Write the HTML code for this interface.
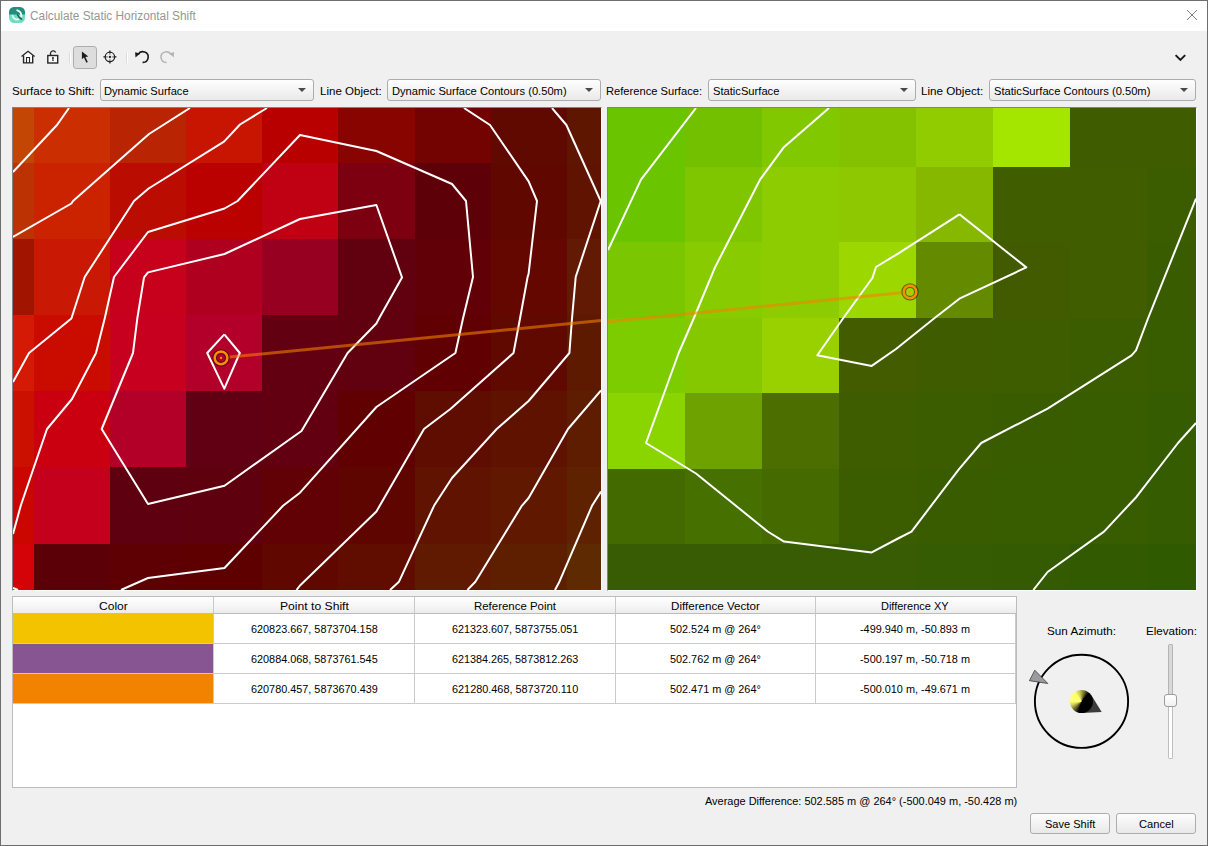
<!DOCTYPE html>
<html><head><meta charset="utf-8"><title>Calculate Static Horizontal Shift</title>
<style>
html,body{margin:0;padding:0;}
body{width:1208px;height:846px;overflow:hidden;background:#f0f0f0;font-family:"Liberation Sans",sans-serif;}
#win{position:absolute;left:0;top:0;width:1208px;height:846px;background:#f0f0f0;overflow:hidden;}
#win>*{position:absolute;}
.t{position:absolute;white-space:nowrap;line-height:14px;transform-origin:0 0;display:block;}
#titlebar{left:1px;top:1px;width:1206px;height:30px;background:#fff;}
.bl{background:#6e6e6e;}
.panel{position:absolute;display:block;}
.frame{box-sizing:border-box;border-top:1px solid #828282;border-left:1px solid #828282;border-right:1px solid #fbfbfb;border-bottom:1px solid #fdfdfd;}
.combo{box-sizing:border-box;height:22px;top:79px;border:1px solid #acacac;border-radius:3px;background:linear-gradient(#fefefe,#f4f4f4 50%,#e9e9e9);}
.combo i{position:absolute;right:7px;top:8px;width:0;height:0;border-left:4px solid transparent;border-right:4px solid transparent;border-top:4.5px solid #4a4a4a;}
.btn{box-sizing:border-box;height:21px;top:813px;border:1px solid #adadad;border-radius:3px;background:linear-gradient(#fdfdfd,#f3f3f3 50%,#e8e8e8);}
#table{left:12px;top:596px;width:1005px;height:192px;box-sizing:border-box;border:1px solid #bcbcbc;background:#fff;}
#table div{position:absolute;}
.hd{top:0;height:16px;background:linear-gradient(#ffffff,#f7f7f7 50%,#ececec);border-bottom:1px solid #bdbdbd;border-right:1px solid #c9c9c9;box-sizing:content-box;}
.vl{top:17px;width:1px;height:90px;background:#cbcbcb;}
.hl{left:0;width:1003px;height:1px;background:#cbcbcb;}
</style></head><body><div id="win">

<div id="titlebar"></div>
<svg style="left:9px;top:7px" width="16" height="16" viewBox="0 0 16 16">
<defs><clipPath id="ic"><rect x="0" y="0" width="16" height="16" rx="5.2" ry="5.2"/></clipPath></defs>
<g clip-path="url(#ic)"><rect width="16" height="16" fill="#6ddcc1"/><rect width="16" height="7.5" fill="#248d7d"/></g>
<path d="M8.3 3.3 A5.6 5.6 0 0 1 12.3 9.4" fill="none" stroke="#f4fffb" stroke-width="1.9" stroke-linecap="round"/>
<path d="M8.5 7.8 Q9.8 10.8 12.6 12.1" fill="none" stroke="#1b5852" stroke-width="1.5" stroke-linecap="round"/>
<path d="M3.5 8.6 A4.8 4.8 0 0 0 9.3 12.4" fill="none" stroke="#e6fbf5" stroke-width="1.9" stroke-linecap="round"/>
</svg>
<span class="t" style="left:30.10px;top:9.00px;font-size:12px;color:#969696;transform:scaleX(0.9863);">Calculate Static Horizontal Shift</span>
<svg style="left:1186px;top:9px" width="12" height="12" viewBox="0 0 12 12"><path d="M1 1 L11 11 M11 1 L1 11" stroke="#7a7a7a" stroke-width="1" fill="none"/></svg>
<svg style="left:14px;top:44px" width="170" height="28" viewBox="14 44 170 28">
<path d="M23.55 56 L28.05 52 L32.7 56 V62.9 H23.55 Z" fill="#fbfbfb"/>
<g fill="none" stroke="#262626" stroke-width="1.3" stroke-linejoin="miter">
<path d="M21.5 56.4 L28.05 51.35 L34.6 56.4"/>
<path d="M23.55 55.4 V62.9 H32.7 V55.4" stroke-width="1.4"/>
<path d="M26.5 62.9 V57.5 H29.5 V62.9" stroke-width="1.1"/>
<rect x="47.8" y="55.5" width="9.9" height="7.5" fill="#fbfbfb" stroke-width="1.4"/>
<path d="M50.5 55.5 V53.2 A2.65 2.65 0 0 1 55.6 52.5" stroke-width="1.3"/>
</g>
<circle cx="52.95" cy="58.1" r="1.0" fill="#1c1c1c"/><rect x="52.2" y="59.4" width="1.5" height="1.5" fill="#1c1c1c"/>
<rect x="69" y="52" width="1" height="11" fill="#dcdcdc"/><rect x="70" y="52" width="1" height="11" fill="#ffffff"/>
<rect x="73.5" y="46.5" width="23" height="22" rx="2.7" ry="2.7" fill="#dddddd" stroke="#adadad" stroke-width="1"/>
<path d="M81.9 51.5 L81.9 59.2 L83.9 57.4 L86.4 62.8 L87.8 62.1 L85.4 57 L88.3 56.6 Z" fill="#1a1a1a"/>
<g fill="none" stroke="#222" stroke-width="1.25">
<circle cx="109.9" cy="56.9" r="4.7"/>
<path d="M109.9 50.4 V53.4 M109.9 60.4 V63.4 M103.4 56.9 H106.4 M113.4 56.9 H116.4"/>
</g>
<path d="M109.9 53.4 V55 M109.9 58.8 V60.4 M106.4 56.9 H108 M111.8 56.9 H113.4" stroke="#8c8c8c" stroke-width="1.1" fill="none"/>
<rect x="108.9" y="55.9" width="2" height="2" fill="#1e1e1e"/>
<rect x="126" y="52" width="1" height="11" fill="#dcdcdc"/><rect x="127" y="52" width="1" height="11" fill="#ffffff"/>
<path d="M138.2 54.6 A5.3 5.3 0 1 1 142.6 62.4" fill="none" stroke="#1a1a1a" stroke-width="1.6"/>
<path d="M135.1 52.3 L140 53.6 L135.5 57.6 Z" fill="#1a1a1a"/>
<path d="M171 54.6 A5.3 5.3 0 1 0 166.6 62.4" fill="none" stroke="#b4b4b4" stroke-width="1.5"/>
<path d="M174.1 52.1 L169.3 53.6 L173.8 57.4 Z" fill="#b4b4b4"/>
</svg>
<svg style="left:1173px;top:52px" width="14" height="11" viewBox="0 0 14 11"><path d="M2.6 3.1 L7.4 7.9 L12.2 3.1" fill="none" stroke="#1a1a1a" stroke-width="2"/></svg>
<span class="t" style="left:11.88px;top:84.00px;font-size:11.5px;color:#000;transform:scaleX(1.0079);">Surface to Shift:</span>
<div class="combo" style="left:100px;width:214px"><i></i></div>
<span class="t" style="left:104.49px;top:84.00px;font-size:11.5px;color:#000;transform:scaleX(0.9662);">Dynamic Surface</span>
<span class="t" style="left:319.66px;top:84.00px;font-size:11.5px;color:#000;transform:scaleX(1.0035);">Line Object:</span>
<div class="combo" style="left:387px;width:214px"><i></i></div>
<span class="t" style="left:391.69px;top:84.00px;font-size:11.5px;color:#000;transform:scaleX(0.9687);">Dynamic Surface Contours (0.50m)</span>
<span class="t" style="left:606.49px;top:84.00px;font-size:11.5px;color:#000;transform:scaleX(0.9690);">Reference Surface:</span>
<div class="combo" style="left:708px;width:208px"><i></i></div>
<span class="t" style="left:712.90px;top:84.00px;font-size:11.5px;color:#000;transform:scaleX(0.9707);">StaticSurface</span>
<span class="t" style="left:921.45px;top:84.00px;font-size:11.5px;color:#000;transform:scaleX(1.0136);">Line Object:</span>
<div class="combo" style="left:989px;width:207px"><i></i></div>
<span class="t" style="left:994.00px;top:84.00px;font-size:11.5px;color:#000;transform:scaleX(0.9709);">StaticSurface Contours (0.50m)</span>
<div class="frame" style="left:12px;top:107px;width:590px;height:484px"></div>
<div class="frame" style="left:607px;top:107px;width:590px;height:484px"></div>
<svg class="panel pl" style="left:13px;top:108px" width="588" height="482" viewBox="13 108 588 482">
<g shape-rendering="crispEdges">
<rect x="13" y="108" width="21" height="55" fill="#c34604"/>
<rect x="34" y="108" width="76" height="55" fill="#cb2e00"/>
<rect x="110" y="108" width="76" height="55" fill="#b92403"/>
<rect x="186" y="108" width="76" height="55" fill="#c71501"/>
<rect x="262" y="108" width="76" height="55" fill="#b90000"/>
<rect x="338" y="108" width="77" height="55" fill="#870400"/>
<rect x="415" y="108" width="76" height="55" fill="#730300"/>
<rect x="491" y="108" width="76" height="55" fill="#600900"/>
<rect x="567" y="108" width="34" height="55" fill="#5e1600"/>
<rect x="13" y="163" width="21" height="76" fill="#bd3203"/>
<rect x="34" y="163" width="76" height="76" fill="#cb2300"/>
<rect x="110" y="163" width="76" height="76" fill="#ba0c00"/>
<rect x="186" y="163" width="76" height="76" fill="#bb0000"/>
<rect x="262" y="163" width="76" height="76" fill="#c00013"/>
<rect x="338" y="163" width="77" height="76" fill="#7c0010"/>
<rect x="415" y="163" width="76" height="76" fill="#5e0008"/>
<rect x="491" y="163" width="76" height="76" fill="#600700"/>
<rect x="567" y="163" width="34" height="76" fill="#601400"/>
<rect x="13" y="239" width="21" height="76" fill="#a11400"/>
<rect x="34" y="239" width="76" height="76" fill="#c91803"/>
<rect x="110" y="239" width="76" height="76" fill="#c7001c"/>
<rect x="186" y="239" width="76" height="76" fill="#b00020"/>
<rect x="262" y="239" width="76" height="76" fill="#970020"/>
<rect x="338" y="239" width="77" height="76" fill="#61000f"/>
<rect x="415" y="239" width="76" height="76" fill="#610007"/>
<rect x="491" y="239" width="76" height="76" fill="#630700"/>
<rect x="567" y="239" width="34" height="76" fill="#631a04"/>
<rect x="13" y="315" width="21" height="76" fill="#d41a05"/>
<rect x="34" y="315" width="76" height="76" fill="#c90b00"/>
<rect x="110" y="315" width="76" height="76" fill="#c7001f"/>
<rect x="186" y="315" width="76" height="76" fill="#b2002a"/>
<rect x="262" y="315" width="76" height="76" fill="#620012"/>
<rect x="338" y="315" width="77" height="76" fill="#61000e"/>
<rect x="415" y="315" width="76" height="76" fill="#600003"/>
<rect x="491" y="315" width="76" height="76" fill="#600900"/>
<rect x="567" y="315" width="34" height="76" fill="#5e1a00"/>
<rect x="13" y="391" width="21" height="76" fill="#cb1000"/>
<rect x="34" y="391" width="76" height="76" fill="#ca0010"/>
<rect x="110" y="391" width="76" height="76" fill="#b30028"/>
<rect x="186" y="391" width="76" height="76" fill="#600012"/>
<rect x="262" y="391" width="76" height="76" fill="#620012"/>
<rect x="338" y="391" width="77" height="76" fill="#600000"/>
<rect x="415" y="391" width="76" height="76" fill="#5f0d00"/>
<rect x="491" y="391" width="76" height="76" fill="#601200"/>
<rect x="567" y="391" width="34" height="76" fill="#5e1c00"/>
<rect x="13" y="467" width="21" height="77" fill="#cb0500"/>
<rect x="34" y="467" width="76" height="77" fill="#c4001c"/>
<rect x="110" y="467" width="76" height="77" fill="#5e000f"/>
<rect x="186" y="467" width="76" height="77" fill="#5f000e"/>
<rect x="262" y="467" width="76" height="77" fill="#610005"/>
<rect x="338" y="467" width="77" height="77" fill="#5f0500"/>
<rect x="415" y="467" width="76" height="77" fill="#601400"/>
<rect x="491" y="467" width="76" height="77" fill="#601800"/>
<rect x="567" y="467" width="34" height="77" fill="#5e2200"/>
<rect x="13" y="544" width="21" height="46" fill="#d40308"/>
<rect x="34" y="544" width="76" height="46" fill="#5c0008"/>
<rect x="110" y="544" width="76" height="46" fill="#5e0003"/>
<rect x="186" y="544" width="76" height="46" fill="#5e0000"/>
<rect x="262" y="544" width="76" height="46" fill="#600800"/>
<rect x="338" y="544" width="77" height="46" fill="#600d00"/>
<rect x="415" y="544" width="76" height="46" fill="#601a02"/>
<rect x="491" y="544" width="76" height="46" fill="#5e1e00"/>
<rect x="567" y="544" width="34" height="46" fill="#5e2a02"/>
</g>
<g fill="none" stroke="#fff" stroke-width="2" stroke-linejoin="round">
<polyline points="69,108 57,125 13,172"/>
<polyline points="190,108 149,134 73,201 71.4,203.5 13,237"/>
<polyline points="267,108 240,124.5 224,141.6 148.6,188.5 134,201 84.7,277 71.4,318.5 29,353 13,382"/>
<polyline points="13,534 20.8,505.5 47,429 72,399 96,353 104.7,318.5 114,277 148,232 224.5,208.5 237.6,201 300,135 376.4,151 452,184 466,201 473,277 463,318.5 455.4,353 376.4,407 300,492.7 283,505.8 224.5,568 148,578 121,590"/>
<polyline points="144,277.4 148,272.4 224.5,254 300,219 376.4,205 402,277.4 379,318.5 376.4,323.5 347.6,353 301.5,431 224.5,485.7 148,504 101.7,429 133,353 137.3,318.5 144,277.4"/>
<polyline points="464,108 490,125 528.6,181.4 537,201 528.6,273.7 527.6,277 520,318.5 513.5,353 450.4,409 424,429 376.4,511.5 300,585.5 296.5,590"/>
<polyline points="552,108 566.4,125 600.7,201 575.7,277 572,318.5 569.4,353 528.6,401 496.7,429 452,478 434,505.8 399,581.7 390,590"/>
<polyline points="601,390.4 568,429 528.6,498 521.8,505.8 475.4,581.7 467.4,590"/>
<polyline points="601,491.5 592,505.8 559.4,581.7 555,590"/>
<polyline points="13,588 18,590"/>
<polyline points="224.3,334.4 239.8,353 224.3,388.6 207.2,353 224.3,334.4"/>
</g>
<line x1="229.36" y1="357.08" x2="601.00" y2="320.60" stroke="#f48200" stroke-opacity="0.58" stroke-width="3"/>
<circle cx="221.0" cy="357.9" r="6.3" fill="none" stroke="#000" stroke-opacity="0.5" stroke-width="4.7"/>
<circle cx="221.0" cy="357.9" r="6.3" fill="none" stroke="#fb8e00" stroke-width="2.6"/>
<rect x="220.0" y="356.9" width="2" height="2" fill="#ff9a00"/>
</svg>
<svg class="panel pr" style="left:608px;top:108px" width="588" height="482" viewBox="608 108 588 482">
<g shape-rendering="crispEdges">
<rect x="608" y="108" width="77" height="59" fill="#6bc400"/>
<rect x="685" y="108" width="77" height="59" fill="#73c000"/>
<rect x="762" y="108" width="77" height="59" fill="#82c800"/>
<rect x="839" y="108" width="77" height="59" fill="#84c200"/>
<rect x="916" y="108" width="77" height="59" fill="#90cc00"/>
<rect x="993" y="108" width="77" height="59" fill="#a4e600"/>
<rect x="1070" y="108" width="77" height="59" fill="#405c00"/>
<rect x="1147" y="108" width="49" height="59" fill="#405c00"/>
<rect x="608" y="167" width="77" height="75" fill="#6bc400"/>
<rect x="685" y="167" width="77" height="75" fill="#80c600"/>
<rect x="762" y="167" width="77" height="75" fill="#8ccc00"/>
<rect x="839" y="167" width="77" height="75" fill="#8ec800"/>
<rect x="916" y="167" width="77" height="75" fill="#86b800"/>
<rect x="993" y="167" width="77" height="75" fill="#405e00"/>
<rect x="1070" y="167" width="77" height="75" fill="#405e00"/>
<rect x="1147" y="167" width="49" height="75" fill="#3c5c00"/>
<rect x="608" y="242" width="77" height="76" fill="#7ac600"/>
<rect x="685" y="242" width="77" height="76" fill="#88cc00"/>
<rect x="762" y="242" width="77" height="76" fill="#8ccc00"/>
<rect x="839" y="242" width="77" height="76" fill="#9cd800"/>
<rect x="916" y="242" width="77" height="76" fill="#648a00"/>
<rect x="993" y="242" width="77" height="76" fill="#435b00"/>
<rect x="1070" y="242" width="77" height="76" fill="#405e00"/>
<rect x="1147" y="242" width="49" height="76" fill="#3a5c00"/>
<rect x="608" y="318" width="77" height="75" fill="#7ccc00"/>
<rect x="685" y="318" width="77" height="75" fill="#86c800"/>
<rect x="762" y="318" width="77" height="75" fill="#98d000"/>
<rect x="839" y="318" width="77" height="75" fill="#445c00"/>
<rect x="916" y="318" width="77" height="75" fill="#405c00"/>
<rect x="993" y="318" width="77" height="75" fill="#3e5c00"/>
<rect x="1070" y="318" width="77" height="75" fill="#3c5c00"/>
<rect x="1147" y="318" width="49" height="75" fill="#385c00"/>
<rect x="608" y="393" width="77" height="76" fill="#8ad400"/>
<rect x="685" y="393" width="77" height="76" fill="#6ea200"/>
<rect x="762" y="393" width="77" height="76" fill="#4c6e00"/>
<rect x="839" y="393" width="77" height="76" fill="#3e5c00"/>
<rect x="916" y="393" width="77" height="76" fill="#3c5c00"/>
<rect x="993" y="393" width="77" height="76" fill="#3a5c00"/>
<rect x="1070" y="393" width="77" height="76" fill="#385c00"/>
<rect x="1147" y="393" width="49" height="76" fill="#365c00"/>
<rect x="608" y="469" width="77" height="75" fill="#426a00"/>
<rect x="685" y="469" width="77" height="75" fill="#467000"/>
<rect x="762" y="469" width="77" height="75" fill="#446a00"/>
<rect x="839" y="469" width="77" height="75" fill="#3c5c00"/>
<rect x="916" y="469" width="77" height="75" fill="#3a5c00"/>
<rect x="993" y="469" width="77" height="75" fill="#385c00"/>
<rect x="1070" y="469" width="77" height="75" fill="#385c00"/>
<rect x="1147" y="469" width="49" height="75" fill="#365c00"/>
<rect x="608" y="544" width="77" height="46" fill="#385c04"/>
<rect x="685" y="544" width="77" height="46" fill="#385c04"/>
<rect x="762" y="544" width="77" height="46" fill="#385c04"/>
<rect x="839" y="544" width="77" height="46" fill="#385c04"/>
<rect x="916" y="544" width="77" height="46" fill="#365c03"/>
<rect x="993" y="544" width="77" height="46" fill="#345b02"/>
<rect x="1070" y="544" width="77" height="46" fill="#325a01"/>
<rect x="1147" y="544" width="49" height="46" fill="#305a00"/>
</g>
<g fill="none" stroke="#fff" stroke-width="2" stroke-linejoin="round">
<polyline points="696,108 641,179.7 608,250"/>
<polyline points="829,108 783.5,147.6 760,179.7 715,267.4 693.7,318.5 678.7,353 646,443 696,473.5 767.7,531.5 784,541.6 871.7,552.4 898,538.5 911.5,531.6 958.6,469.6 981.2,443 1047.6,408.7 1131.6,355.3 1136,350.3 1148,318.5 1196,198.5"/>
<polyline points="959.4,214.3 1026.3,267.4 959.4,298.7 934,318.5 896,349 871.7,365.9 817.3,355.3 843,318.5 872.4,278 876,267 898,253.6 959.4,214.3"/>
<polyline points="1196,423 1178,443 1136.6,496.7 1104,531.6 1047.6,572 1033.3,590"/>
</g>
<line x1="608.00" y1="321.80" x2="901.64" y2="292.73" stroke="#f48200" stroke-opacity="0.58" stroke-width="3"/>
<circle cx="910.0" cy="291.9" r="6.3" fill="none" stroke="#000" stroke-opacity="0.5" stroke-width="4.7"/>
<circle cx="910.0" cy="291.9" r="6.3" fill="none" stroke="#fb8e00" stroke-width="2.6"/>
<rect x="909.0" y="290.9" width="2" height="2" fill="#ff9a00"/>
</svg>
<div id="table">
<div class="hd" style="left:0px;width:200px"></div>
<div class="hd" style="left:201px;width:200px"></div>
<div class="hd" style="left:402px;width:200px"></div>
<div class="hd" style="left:603px;width:199px"></div>
<div class="hd" style="left:803px;width:200px;border-right:none"></div>
<div class="vl" style="left:200px"></div>
<div class="vl" style="left:401px"></div>
<div class="vl" style="left:602px"></div>
<div class="vl" style="left:802px"></div>
<div class="vl" style="left:1002px"></div>
<div class="hl" style="top:46px"></div>
<div class="hl" style="top:76px"></div>
<div class="hl" style="top:106px"></div>
<div style="left:0;top:17px;width:200px;height:29px;background:#f3c300"></div>
<div style="left:0;top:47px;width:200px;height:29px;background:#875592"></div>
<div style="left:0;top:77px;width:200px;height:29px;background:#f28300"></div>
</div>
<span class="t" style="left:98.59px;top:599.00px;font-size:11.5px;color:#000;transform:scaleX(1.0480);">Color</span>
<span class="t" style="left:279.71px;top:599.00px;font-size:11.5px;color:#000;transform:scaleX(1.0560);">Point to Shift</span>
<span class="t" style="left:474.47px;top:599.00px;font-size:11.5px;color:#000;transform:scaleX(0.9944);">Reference Point</span>
<span class="t" style="left:671.35px;top:599.00px;font-size:11.5px;color:#000;transform:scaleX(1.0095);">Difference Vector</span>
<span class="t" style="left:881.41px;top:599.00px;font-size:11.5px;color:#000;transform:scaleX(0.9545);">Difference XY</span>
<span class="t" style="left:250.75px;top:622.00px;font-size:11.5px;color:#000;transform:scaleX(0.9435);">620823.667, 5873704.158</span>
<span class="t" style="left:451.56px;top:622.00px;font-size:11.5px;color:#000;transform:scaleX(0.9401);">621323.607, 5873755.051</span>
<span class="t" style="left:670.17px;top:622.00px;font-size:11.5px;color:#000;transform:scaleX(0.9436);">502.524 m @ 264°</span>
<span class="t" style="left:860.33px;top:622.00px;font-size:11.5px;color:#000;transform:scaleX(0.9453);">-499.940 m, -50.893 m</span>
<span class="t" style="left:250.75px;top:652.00px;font-size:11.5px;color:#000;transform:scaleX(0.9433);">620884.068, 5873761.545</span>
<span class="t" style="left:451.56px;top:652.00px;font-size:11.5px;color:#000;transform:scaleX(0.9398);">621384.265, 5873812.263</span>
<span class="t" style="left:670.17px;top:652.00px;font-size:11.5px;color:#000;transform:scaleX(0.9436);">502.762 m @ 264°</span>
<span class="t" style="left:860.33px;top:652.00px;font-size:11.5px;color:#000;transform:scaleX(0.9453);">-500.197 m, -50.718 m</span>
<span class="t" style="left:250.75px;top:682.00px;font-size:11.5px;color:#000;transform:scaleX(0.9438);">620780.457, 5873670.439</span>
<span class="t" style="left:451.55px;top:682.00px;font-size:11.5px;color:#000;transform:scaleX(0.9455);">621280.468, 5873720.110</span>
<span class="t" style="left:670.17px;top:682.00px;font-size:11.5px;color:#000;transform:scaleX(0.9436);">502.471 m @ 264°</span>
<span class="t" style="left:860.33px;top:682.00px;font-size:11.5px;color:#000;transform:scaleX(0.9453);">-500.010 m, -49.671 m</span>
<span class="t" style="left:1046.68px;top:624.00px;font-size:11.5px;color:#000;transform:scaleX(1.0166);">Sun Azimuth:</span>
<span class="t" style="left:1145.55px;top:624.00px;font-size:11.5px;color:#000;transform:scaleX(1.0097);">Elevation:</span>
<svg style="left:1024px;top:648px" width="112" height="106" viewBox="1024 648 112 106">
<circle cx="1081.5" cy="701.3" r="46.6" fill="none" stroke="#000" stroke-width="1.9"/>
<path d="M1029.4 680.7 L1034.8 670.2 L1047.8 683.5 Z" fill="#9b9b9f" stroke="#2a2a2a" stroke-width="0.7"/>
<path d="M1101.7 712.0 L1082.02 712.89 L1091.38 695.22 Z" fill="#3b3b3b"/>
</svg>
<div style="left:1069.9px;top:689.7px;width:23.2px;height:23.2px;border-radius:50%;background:conic-gradient(from 196deg,#000 0deg,#6c6c2c 28deg,#d6d65e 56deg,#ffff72 74deg,#ffff72 128deg,#c4c454 154deg,#6c6c2c 181deg,#000 205deg,#000 360deg)"></div>
<div style="left:1168px;top:644px;width:5px;height:56px;box-sizing:border-box;border:1px solid #b4b4b4;border-bottom:none;border-radius:2px 2px 0 0;background:#d9d9d9"></div>
<div style="left:1168px;top:700px;width:5px;height:59px;box-sizing:border-box;border:1px solid #bdbdbd;border-top:none;border-radius:0 0 2px 2px;background:#fff"></div>
<div style="left:1164px;top:694px;width:13px;height:13px;box-sizing:border-box;border:1px solid #9c9c9c;border-radius:3px;background:linear-gradient(#ffffff,#f1f1f1)"></div>
<span class="t" style="left:705.49px;top:794.00px;font-size:11.5px;color:#000;transform:scaleX(0.9523);">Average Difference: 502.585 m @ 264° (-500.049 m, -50.428 m)</span>
<div class="btn" style="left:1030px;width:80px"></div>
<div class="btn" style="left:1116px;width:80px"></div>
<span class="t" style="left:1044.71px;top:817.00px;font-size:11.5px;color:#000;transform:scaleX(0.9589);">Save Shift</span>
<span class="t" style="left:1138.94px;top:817.00px;font-size:11.5px;color:#000;transform:scaleX(0.9690);">Cancel</span>
<div class="bl" style="left:0;top:0;width:1208px;height:1px"></div>
<div class="bl" style="left:0;top:0;width:1px;height:846px"></div>
<div class="bl" style="left:1207px;top:0;width:1px;height:846px"></div>
<div class="bl" style="left:0;top:844.6px;width:1208px;height:1.4px"></div>
</div></body></html>
